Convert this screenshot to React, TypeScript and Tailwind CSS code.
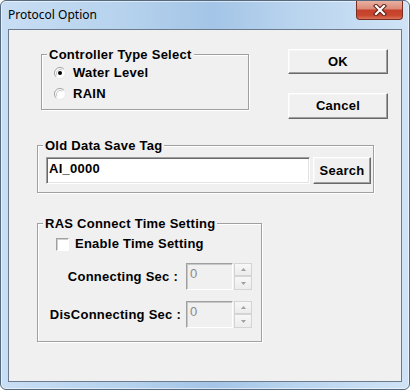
import React from "react";

const F = { fontFamily: '"Liberation Sans", Arial, sans-serif' };

function Group({ title, className, children }: { title: string; className: string; children?: React.ReactNode }) {
  return (
    <div className={"relative border border-[#a0a0a0] shadow-[inset_1px_1px_0_#ffffff,1px_1px_0_#ffffff] " + className}>
      <span className="absolute -top-[8px] left-[5px] bg-[#f0f0f0] px-[2px] leading-[16px] whitespace-nowrap">{title}</span>
      {children}
    </div>
  );
}

function Radio({ checked }: { checked?: boolean }) {
  return (
    <svg width="12" height="12" viewBox="0 0 12 12">
      <circle cx="6" cy="6" r="5.5" fill="#ffffff" />
      <path d="M 2.1 9.9 A 5.5 5.5 0 0 1 9.9 2.1" stroke="#a0a0a0" fill="none" />
      <path d="M 9.9 2.1 A 5.5 5.5 0 0 1 2.1 9.9" stroke="#e8e8e8" fill="none" />
      <path d="M 3 8.5 A 4 4 0 0 1 8.5 3" stroke="#c8c8c8" fill="none" />
      {checked && <circle cx="6" cy="6" r="2" fill="#000000" />}
    </svg>
  );
}

function Btn({ children, className }: { children: React.ReactNode; className: string }) {
  return (
    <div
      className={
        "flex items-center justify-center bg-[#f0f0f0] border border-t-white border-l-white border-b-[#696969] border-r-[#696969] shadow-[inset_-1px_-1px_0_#a0a0a0,inset_1px_1px_0_#f6f6f6] leading-[16px] " +
        className
      }
    >
      {children}
    </div>
  );
}

function Arrow({ up }: { up?: boolean }) {
  return (
    <svg width="5" height="3" viewBox="0 0 5 3">
      {up ? <path d="M0 3 L2.5 0 L5 3 Z" fill="#a0a0a0" /> : <path d="M0 0 L2.5 3 L5 0 Z" fill="#a0a0a0" />}
    </svg>
  );
}

function SpinRow({ label, pr, className }: { label: string; pr: string; className: string }) {
  return (
    <div className={"flex items-center h-[27px] " + className}>
      <div className={"w-[148px] text-right whitespace-nowrap leading-[16px] " + pr}>{label}</div>
      <div className="w-[47px] h-[27px] border border-t-[#a0a0a0] border-l-[#a0a0a0] border-b-white border-r-white shadow-[inset_1px_1px_0_#c8c8c8] bg-[#f0f0f0] pl-[3px] pt-[2px] font-normal text-[#8a8a8a] leading-[16px]">
        0
      </div>
      <div className="ml-[1px] w-[18px] h-[27px] flex flex-col">
        <div className="h-[13px] flex items-center justify-center border border-[#d4d4d4] bg-[linear-gradient(#f7f7f7,#ececec)]">
          <Arrow up />
        </div>
        <div className="h-[14px] flex items-center justify-center border border-[#d4d4d4] bg-[linear-gradient(#f7f7f7,#ececec)]">
          <Arrow />
        </div>
      </div>
    </div>
  );
}

export default function App() {
  return (
    <div className="w-[410px] h-[390px] bg-white">
      <div className="w-[410px] h-[390px] rounded-[6px] border border-[#55697f] shadow-[inset_0_0_0_1px_rgba(255,255,255,0.55)] bg-[linear-gradient(90deg,#c8def4_0%,#b6d2ed_30%,#a4c5e7_52%,#b9d4ee_72%,#d0e3f6_100%)] flex flex-col">
        <div className="h-[28px] flex items-start">
          <div className="h-[28px] flex items-center pl-[7px] text-[12px] text-black" style={{ fontFamily: '"Noto Sans", sans-serif' }}>
            Protocol Option
          </div>
          <div className="ml-auto mr-[6px] w-[47px] h-[19px] rounded-b-[4px] border border-t-0 border-[#7a2d22] bg-[linear-gradient(#e9b0a2_0%,#db8c78_42%,#c5402a_52%,#c9472f_80%,#da7357_100%)] flex items-center justify-center">
            <svg width="16" height="12" viewBox="0 0 16 12">
              <path d="M4 2 L12 10 M12 2 L4 10" stroke="#5a2018" strokeWidth="4.2" strokeLinecap="square" />
              <path d="M4 2 L12 10 M12 2 L4 10" stroke="#ffffff" strokeWidth="2.2" strokeLinecap="square" />
            </svg>
          </div>
        </div>
        <div className="flex-1 mx-[7px] mb-[7px] border border-[#6b7b8d] bg-[#f0f0f0] flex flex-col pl-[28px] font-bold text-[13px] tracking-[0.25px] text-black" style={F}>
          <div className="flex items-start pt-[19px]">
            <Group title="Controller Type Select" className="ml-[4px] mt-[5px] w-[208px] h-[56px] pt-[7px] pl-[12px]">
              <div className="flex items-center h-[21px] gap-[7px]">
                <Radio checked />
                <span className="leading-[16px]">Water Level</span>
              </div>
              <div className="flex items-center h-[21px] gap-[7px]">
                <Radio />
                <span className="leading-[16px]">RAIN</span>
              </div>
            </Group>
            <div className="ml-[39px] flex flex-col">
              <Btn className="w-[100px] h-[25px]">OK</Btn>
              <Btn className="mt-[19px] w-[100px] h-[26px]">Cancel</Btn>
            </div>
          </div>
          <Group title="Old Data Save Tag" className="mt-[26px] w-[337px] h-[48px] pt-[11px] pl-[8px] flex items-start">
            <div className="w-[264px] h-[27px] border border-t-[#a0a0a0] border-l-[#a0a0a0] border-b-white border-r-white shadow-[inset_1px_1px_0_#696969,inset_-1px_-1px_0_#e3e3e3] bg-white pl-[2px] pt-[3px] leading-[16px]">
              AI_0000
            </div>
            <Btn className="ml-[3px] w-[58px] h-[27px]">Search</Btn>
          </Group>
          <Group title="RAS Connect Time Setting" className="mt-[30px] w-[225px] h-[119px] pt-[10px]">
            <div className="flex items-center h-[20px] pl-[18px] gap-[6px]">
              <div className="w-[13px] h-[13px] border border-t-[#a0a0a0] border-l-[#a0a0a0] border-b-white border-r-white shadow-[inset_1px_1px_0_#d0d0d0] bg-white" />
              <span className="leading-[16px]">Enable Time Setting</span>
            </div>
            <SpinRow label="Connecting Sec :" pr="pr-[8px]" className="mt-[9px]" />
            <SpinRow label="DisConnecting Sec :" pr="pr-[5px]" className="mt-[11px]" />
          </Group>
        </div>
      </div>
    </div>
  );
}
